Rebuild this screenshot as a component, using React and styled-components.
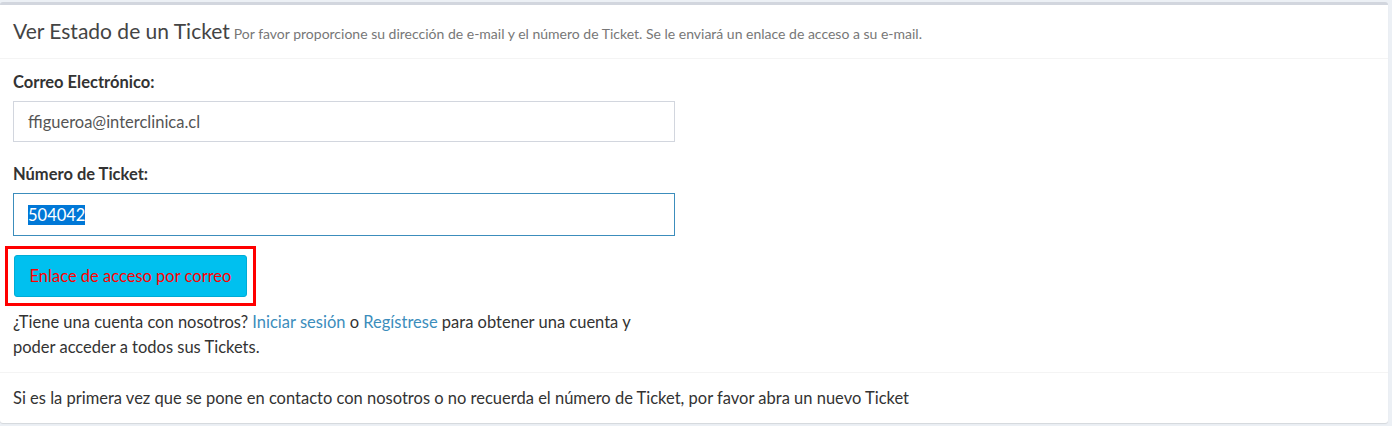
import * as React from "react";
import styled, { createGlobalStyle } from "styled-components";

const GlobalStyle = createGlobalStyle`
    html, body {
        margin: 0;
        padding: 0;
        background-color: #ecf0f5;
    }
    body {
        font-family: "Lato", "Liberation Sans", sans-serif;
        font-size: 16.5px;
        color: #333;
    }
`;

const Page = styled.div`
    padding: 2px 4px 3px 0px;
`;

const Box = styled.div`
    background-color: #ffffff;
    border-top: 3px solid #d2d6de;
    border-radius: 3px;
    box-shadow: 0 1px 1px rgba(0, 0, 0, 0.1);
`;

const BoxHeader = styled.div`
    padding: 11px 13px 10px 13px;
    line-height: 29px;
    border-bottom: 1px solid #f4f4f4;
    white-space: nowrap;
`;

const Title = styled.span`
    font-size: 21px;
    color: #444;
`;

const Subtitle = styled.small`
    font-size: 14px;
    color: #777;
    margin-left: 4px;
`;

const BoxBody = styled.div`
    padding: 12px 13px 12px 13px;
`;

const FormGroup = styled.div`
    margin-bottom: ${(p) => p.$gap || 0}px;
`;

const Label = styled.div`
    font-weight: 700;
    line-height: 22px;
    margin-bottom: 8px;
`;

const Field = styled.div`
    box-sizing: border-box;
    width: 662px;
    height: ${(p) => p.$height}px;
    border: 1px solid ${(p) => (p.$focused ? "#3c8dbc" : "#d2d6de")};
    padding: 0 14px;
    display: flex;
    align-items: center;
    color: #555;
`;

const Selected = styled.span`
    background-color: #0078d7;
    color: #ffffff;
    line-height: 20px;
`;

const Highlight = styled.div`
    display: inline-block;
    margin-left: -8px;
    border: 3px solid #ff0000;
    padding: 6px;
`;

const Button = styled.button`
    box-sizing: border-box;
    width: 233px;
    height: 42px;
    background-color: #00c0ef;
    border: 1px solid #00acd6;
    border-radius: 3px;
    color: #ff0000;
    font-family: inherit;
    font-size: 16.5px;
    padding: 0 10px;
    cursor: pointer;
`;

const Paragraph = styled.p`
    margin: 4px 0 0 0;
    width: 640px;
    line-height: 25px;
`;

const Link = styled.a`
    color: #3c8dbc;
    text-decoration: none;
`;

const BoxFooter = styled.div`
    border-top: 1px solid #f4f4f4;
    padding: 13px 13px 13px 13px;
    line-height: 24px;
`;

const App = () => {
    return (
        <Page>
            <GlobalStyle />
            <Box>
                <BoxHeader>
                    <Title>Ver Estado de un Ticket</Title>
                    <Subtitle>
                        Por favor proporcione su dirección de e-mail y el número de Ticket. Se le enviará un enlace de acceso a su e-mail.
                    </Subtitle>
                </BoxHeader>
                <BoxBody>
                    <FormGroup $gap={21}>
                        <Label>Correo Electrónico:</Label>
                        <Field $height={41}>ffigueroa@interclinica.cl</Field>
                    </FormGroup>
                    <FormGroup $gap={10}>
                        <Label>Número de Ticket:</Label>
                        <Field $height={43} $focused>
                            <Selected>504042</Selected>
                        </Field>
                    </FormGroup>
                    <Highlight>
                        <Button>Enlace de acceso por correo</Button>
                    </Highlight>
                    <Paragraph>
                        ¿Tiene una cuenta con nosotros? <Link href="#">Iniciar sesión</Link> o{" "}
                        <Link href="#">Regístrese</Link> para obtener una cuenta y poder acceder a todos sus Tickets.
                    </Paragraph>
                </BoxBody>
                <BoxFooter>
                    Si es la primera vez que se pone en contacto con nosotros o no recuerda el número de Ticket, por favor abra un nuevo Ticket
                </BoxFooter>
            </Box>
        </Page>
    );
};

export default App;
